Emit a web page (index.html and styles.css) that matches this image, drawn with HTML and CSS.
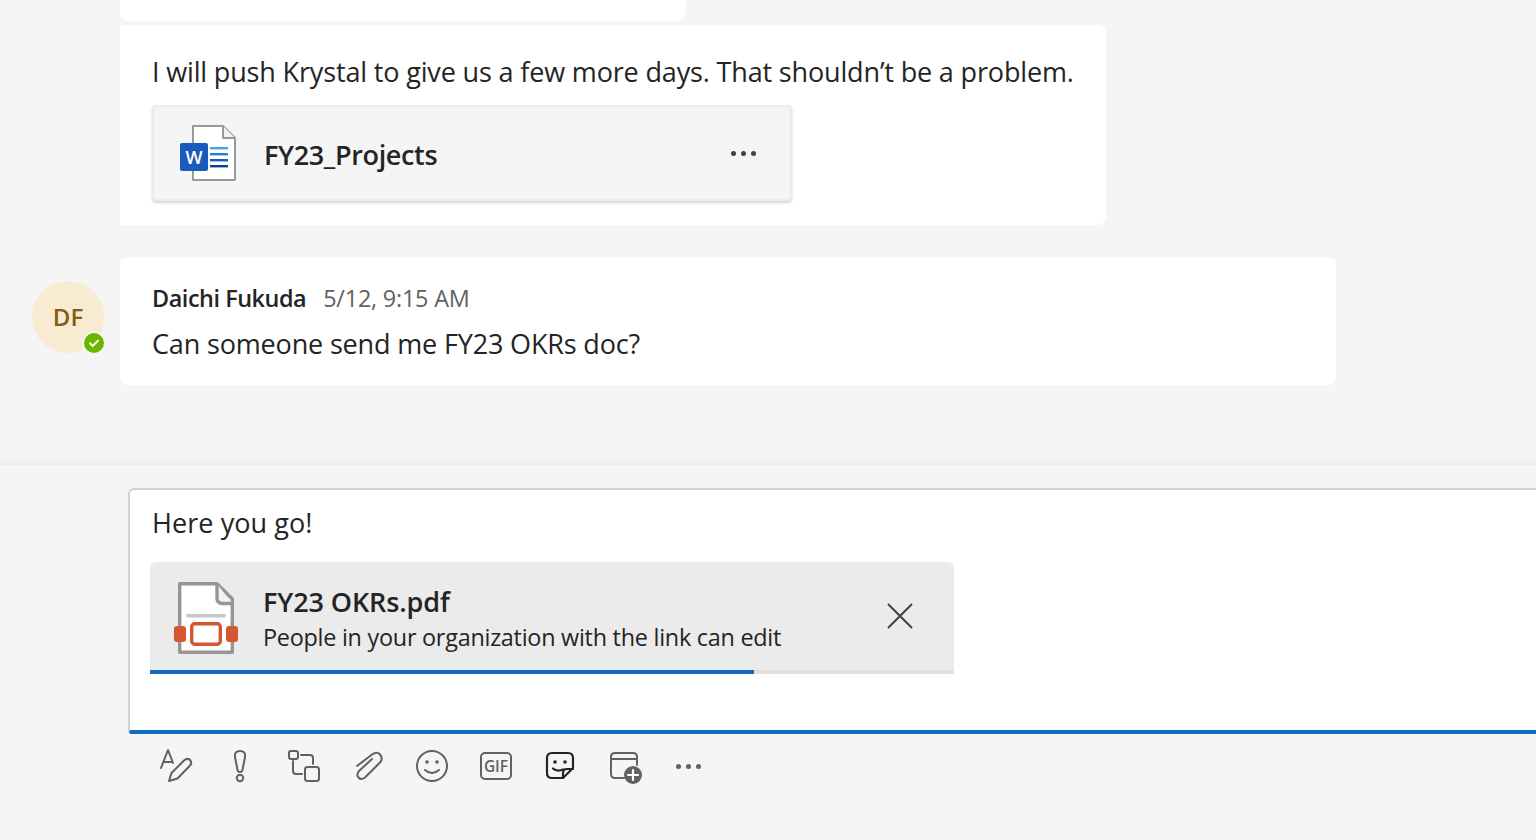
FILE: index.html
```html
<!DOCTYPE html>
<html lang="en">
<head>
<meta charset="utf-8">
<title>Chat</title>
<link rel="stylesheet" href="styles.css">
</head>
<body>
<main class="app">
  <section class="thread">
    <div class="row">
      <div class="bubble bubble-prev"></div>
    </div>
    <div class="row row-tight">
      <div class="bubble bubble-file">
        <p class="msg msg-push">I will push Krystal to give us a few more days. That shouldn’t be a problem.</p>
        <div class="file-card">
          <svg class="word-icon" width="56" height="56" viewBox="0 0 56 56">
            <path d="M13 1H43L55 13V55H13Z" fill="#fff" stroke="#9a9a9a" stroke-width="2" stroke-linejoin="round"/>
            <path d="M43 1V13H55" fill="#f1f1f1" stroke="#9a9a9a" stroke-width="2" stroke-linejoin="round"/>
            <rect x="30" y="22" width="18" height="2.4" fill="#41a5ee"/>
            <rect x="30" y="28" width="18" height="2.4" fill="#2b7cd3"/>
            <rect x="30" y="34" width="18" height="2.4" fill="#185abd"/>
            <rect x="30" y="40" width="18" height="2.4" fill="#103f91"/>
            <rect x="0" y="18" width="28" height="28" rx="2" fill="#185abd"/>
            <text x="14" y="39" class="word-w">W</text>
          </svg>
          <span class="file-name">FY23_Projects</span>
          <span class="dots dots-file"><i></i><i></i><i></i></span>
        </div>
      </div>
    </div>
    <div class="row row-msg">
      <div class="avatar">DF
        <svg class="presence" width="24" height="24" viewBox="0 0 24 24">
          <circle cx="12" cy="12" r="11" fill="#6bb700" stroke="#f5f5f5" stroke-width="2"/>
          <path d="M8 12.3l2.8 2.6L16 9.6" fill="none" stroke="#fff" stroke-width="2" stroke-linecap="round" stroke-linejoin="round"/>
        </svg>
      </div>
      <div class="bubble bubble-daichi">
        <div class="meta"><span class="author">Daichi Fukuda</span><span class="time">5/12, 9:15 AM</span></div>
        <p class="msg msg-ask">Can someone send me FY23 OKRs doc?</p>
      </div>
    </div>
  </section>

  <section class="composer">
    <div class="editor">
      <p class="draft">Here you go!</p>
      <div class="attachment">
        <div class="attach-body">
          <svg class="pdf-icon" width="64" height="76" viewBox="0 0 64 76">
            <path d="M5.700 3.700H43L58.300 19V72.300H5.700Z" fill="#fff" stroke="#979593" stroke-width="3.400" stroke-linejoin="round"/>
            <path d="M43 3.700V18Q43 23.500 48.500 23.500H58.300" fill="#f3f3f3" stroke="#979593" stroke-width="3.400" stroke-linejoin="round"/>
            <rect x="12" y="34" width="40" height="3.600" rx="1.800" fill="#c8c6c4"/>
            <rect x="0" y="46" width="12" height="16" rx="3" fill="#d65532"/>
            <rect x="52" y="46" width="12" height="16" rx="3" fill="#d65532"/>
            <rect x="17.700" y="43.700" width="28.600" height="20.600" rx="3" fill="#fff" stroke="#d65532" stroke-width="3.400"/>
          </svg>
          <div class="attach-text">
            <span class="attach-name">FY23 OKRs.pdf</span>
            <span class="attach-perm">People in your organization with the link can edit</span>
          </div>
          <svg class="close-icon" width="26" height="26" viewBox="0 0 26 26">
            <path d="M1 1L25 25M25 1L1 25" stroke="#424242" stroke-width="2" fill="none"/>
          </svg>
        </div>
        <div class="progress"><div class="progress-fill" style="width:75.1%"></div></div>
      </div>
    </div>
    <div class="toolbar">
      <svg class="tool" width="36" height="36" viewBox="0 0 36 36" fill="none" stroke="#616161" stroke-width="2" stroke-linecap="round" stroke-linejoin="round">
        <path d="M3 20L10 2L15 15M5.500 14H13"/>
        <path d="M11 33L13.500 25L26 12.500Q29.500 9.500 32 12Q34.500 15 32 17.500L19.500 30.500Z"/>
      </svg>
      <svg class="tool" width="36" height="36" viewBox="0 0 36 36" fill="none" stroke="#616161" stroke-width="2">
        <path d="M18 3C14 3 12.500 5 13 9L15.500 22Q16 24 18 24Q20 24 20.500 22L23 9C23.500 5 22 3 18 3Z"/>
        <circle cx="18" cy="30" r="3.200"/>
      </svg>
      <svg class="tool" width="36" height="36" viewBox="0 0 36 36" fill="none" stroke="#616161" stroke-width="2" stroke-linecap="round" stroke-linejoin="round">
        <rect x="3" y="3" width="9" height="8" rx="2"/>
        <rect x="19" y="19" width="14" height="14" rx="2.500"/>
        <path d="M15 7H24Q27 7 27 10V16M7 13V23Q7 26 10 26H16"/>
      </svg>
      <svg class="tool" width="36" height="36" viewBox="0 0 36 36" fill="none" stroke="#616161" stroke-width="2" stroke-linecap="round" stroke-linejoin="round">
        <path d="M7 18L22 6.500Q27 3 30 6.500Q33.500 10.500 30 14.500L15 29.500Q11 32.500 8.500 29.500Q6 26.500 9 23L22 11"/>
      </svg>
      <svg class="tool" width="36" height="36" viewBox="0 0 36 36" fill="none" stroke="#616161" stroke-width="2" stroke-linecap="round">
        <circle cx="18" cy="18" r="15"/>
        <circle cx="13" cy="14" r="1.800" fill="#616161" stroke="none"/>
        <circle cx="23" cy="14" r="1.800" fill="#616161" stroke="none"/>
        <path d="M11 22Q18 28 25 22"/>
      </svg>
      <span class="tool gif"><span class="gif-label">GIF</span></span>
      <svg class="tool" width="36" height="36" viewBox="0 0 36 36" fill="none" stroke="#242424" stroke-width="2.200" stroke-linecap="round" stroke-linejoin="round">
        <path d="M21 30H10Q5 30 5 25V10Q5 5 10 5H26Q31 5 31 10V20L21 30Z"/>
        <circle cx="13" cy="14" r="1.800" fill="#242424" stroke="none"/>
        <circle cx="23" cy="14" r="1.800" fill="#242424" stroke="none"/>
        <path d="M11 20.500Q15 24 21 21.500M21 30V25Q21 21 25 21H31"/>
      </svg>
      <svg class="tool" width="36" height="36" viewBox="0 0 36 36" fill="none" stroke="#616161" stroke-width="2" stroke-linecap="round">
        <path d="M18 30H9Q5 30 5 26V9Q5 5 9 5H27Q31 5 31 9V17M5 11H31"/>
        <circle cx="27" cy="27" r="9" fill="#616161" stroke="none"/>
        <path d="M27 22V32M22 27H32" stroke="#fff" stroke-width="2.200"/>
      </svg>
      <span class="tool dots-wrap"><span class="dots dots-tool"><i></i><i></i><i></i></span></span>
    </div>
  </section>
</main>
</body>
</html>
```

FILE: styles.css
```css
* { box-sizing: border-box; }
html, body { margin: 0; padding: 0; height: 100%; overflow: hidden; }
body {
  background: #f5f5f5;
  color: #242424;
  font-family: "Open Sans", "Noto Sans", "Liberation Sans", sans-serif;
}
.app { width: 1536px; height: 840px; display: flex; flex-direction: column; overflow: hidden; }
.thread { height: 463px; flex: none; }
.row { display: flex; padding-left: 120px; }
.row-tight { margin-top: 4px; }
.row-msg { margin-top: 32px; padding-left: 32px; gap: 16px; }
.bubble { background: #fff; border-radius: 0 0 8px 8px; }
.bubble-prev { width: 566px; height: 21px; }
.bubble-file { width: 986px; height: 200px; padding: 27px 0 0 32px; border-radius: 0 8px 8px 0; }
.bubble-daichi { width: 1216px; height: 128px; padding: 26px 32px 0; border-radius: 8px; }
.msg { margin: 0; font-size: 27px; line-height: 40px; }
.msg-push { letter-spacing: -0.155px; }
.msg-ask { margin-top: 11px; letter-spacing: -0.16px; }
.file-card {
  margin-top: 13px; width: 640px; height: 96px;
  display: flex; align-items: center; padding: 0 34px 0 26px;
  background: #f5f5f5; border: 2px solid #ebebeb; border-radius: 4px;
  box-shadow: 0 2px 3px rgba(0,0,0,.16);
}
.word-icon { flex: none; }
.word-w { font: 600 18px "Open Sans", sans-serif; fill: #fff; text-anchor: middle; }
.file-name { margin-left: 28px; font-size: 27px; font-weight: 600; letter-spacing: -0.35px; flex: 1; margin-top: 2px; }
.dots { display: flex; gap: 5px; }
.dots i { width: 5px; height: 5px; border-radius: 50%; background: #424242; }
.dots-file { margin-top: 0; }
.avatar {
  margin-top: 24px; width: 72px; height: 72px; border-radius: 50%; flex: none; position: relative;
  background: #f9ebd1; color: #835b14; display: flex; align-items: center; justify-content: center;
  font-size: 24px; font-weight: 600; padding-bottom: 2px;
}
.presence { position: absolute; right: -2px; bottom: -2px; }
.meta { display: flex; align-items: baseline; gap: 17px; height: 30px; line-height: 30px; }
.author { font-size: 23.400px; font-weight: 600; letter-spacing: -0.45px; }
.time { font-size: 23.400px; color: #616161; letter-spacing: -0.2px; }
.composer {
  flex: 1; border-top: 2px solid #ececec;
  box-shadow: 0 -3px 8px rgba(0,0,0,.02);
  padding: 23px 0 0 128px;
}
.editor {
  width: 1500px; height: 246px; background: #fff;
  border: 2px solid #d1d1d1; border-bottom: 4px solid #0f6cbd; border-right: 0;
  border-radius: 6px 0 0 4px; padding: 0 0 0 20px;
}
.draft { margin: 0; height: 72px; font-size: 27px; line-height: 66px; padding-left: 2px; letter-spacing: 0.07px; }
.attachment { width: 804px; height: 112px; display: flex; flex-direction: column; background: #ebebeb; border-radius: 6px 6px 0 0; overflow: hidden; }
.attach-body { flex: 1; display: flex; align-items: center; padding: 0 41px 0 24px; }
.pdf-icon { flex: none; margin-top: 4px; }
.attach-text { margin-left: 25px; flex: 1; display: flex; flex-direction: column; margin-top: 5px; }
.attach-name { font-size: 27px; font-weight: 600; line-height: 37px; letter-spacing: -0.1px; }
.attach-perm { font-size: 23.400px; line-height: 35px; letter-spacing: -0.25px; }
.close-icon { flex: none; }
.progress { height: 4px; background: #e0e0e0; flex: none; }
.progress-fill { height: 100%; background: #0f6cbd; }
.toolbar { display: flex; gap: 28px; padding: 14px 0 0 30px; }
.tool { flex: none; width: 36px; height: 36px; display: flex; align-items: center; justify-content: center; }
.gif-label {
  width: 32px; height: 28px; border: 2px solid #616161; border-radius: 5px; display: flex; align-items: center; justify-content: center;
  font: 600 15.500px "Open Sans", sans-serif; color: #616161;
}
.dots-tool i { background: #616161; }
```
